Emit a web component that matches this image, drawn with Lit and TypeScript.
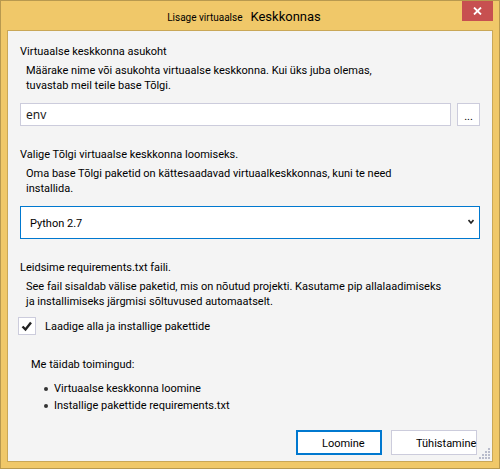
import { LitElement, html, css } from "lit";
import { customElement, state } from "lit/decorators.js";

@customElement("app-root")
export class AppRoot extends LitElement {
  @state() private install = true;

  static styles = css`
    :host {
      display: block;
      font-family: Roboto, "Liberation Sans", sans-serif;
      font-size: 11px;
      line-height: 15px;
      color: #000;
    }
    * { box-sizing: border-box; }
    .window {
      display: flex;
      flex-direction: column;
      min-height: 100vh;
      background: #f0c869;
      border: 1px solid #b8994f;
      padding: 0 6px 6px;
    }
    .titlebar {
      display: grid;
      grid-template-columns: 31px 1fr 31px;
      height: 29px;
    }
    .title {
      grid-column: 2;
      display: flex;
      justify-content: center;
      align-items: baseline;
      gap: 8px;
      margin: 0;
      padding-top: 8px;
      padding-right: 12px;
      font-size: 10px;
      font-weight: 400;
      line-height: 16px;
    }
    .title .strong { font-size: 13px; }
    .close {
      height: 20px;
      padding: 0;
      border: 0;
      background: #c75050;
      display: flex;
      align-items: center;
      justify-content: center;
    }
    .panel {
      flex: 1;
      display: flex;
      flex-direction: column;
      background: #f4f4f4;
      border: 1px solid #c9a757;
      padding: 12px 0 0;
    }
    .section { padding: 0 12px; margin-bottom: 20px; }
    .notice { padding: 0 12px; margin-bottom: 8px; }
    .heading {
      display: block;
      margin: 0;
      font-size: 11px;
      font-weight: 400;
      line-height: 18px;
    }
    .text { margin: 2px 0 0; padding-left: 6px; }
    .row, .picker { margin-top: 10px; }
    .row { display: flex; gap: 6px; }
    .field {
      flex: 1;
      min-width: 0;
      height: 23px;
      padding: 0 5px;
      border: 1px solid #ccccdc;
      border-radius: 0;
      background: #fff;
      font: 12px "Noto Sans", sans-serif;
      color: #222;
      outline: none;
    }
    .browse {
      width: 23px;
      height: 23px;
      padding: 4px 0 0;
      border: 1px solid #ccccdc;
      background: #fff;
      font: inherit;
      color: #000;
    }
    .picker { position: relative; }
    .select {
      display: block;
      width: 100%;
      height: 33px;
      padding: 2px 9px 0;
      appearance: none;
      border: 1px solid #0078cf;
      border-radius: 0;
      background: #fff;
      font: inherit;
      color: #000;
      outline: none;
    }
    .chevron {
      position: absolute;
      right: 6px;
      top: 13px;
      pointer-events: none;
    }
    .check {
      display: flex;
      align-items: center;
      gap: 9px;
      padding: 0 10px;
      margin-bottom: 21px;
    }
    .box { display: grid; width: 18px; height: 18px; }
    .box > * { grid-area: 1 / 1; }
    .tick {
      appearance: none;
      width: 18px;
      height: 18px;
      margin: 0;
      border: 1px solid #ccccdc;
      background: #fff;
    }
    .mark { pointer-events: none; }
    .summary { padding: 0 23px; }
    .list {
      margin: 6px 0 0;
      padding: 0 0 0 13px;
      list-style: none;
      line-height: 17px;
    }
    .item { display: flex; align-items: center; gap: 6px; }
    .item::before {
      content: "";
      width: 4px;
      height: 4px;
      border-radius: 50%;
      background: #333;
    }
    .footer {
      display: flex;
      justify-content: flex-end;
      gap: 9px;
      margin-top: auto;
      padding: 0 2px 2px 0;
    }
    .action {
      width: 86px;
      height: 25px;
      margin-bottom: 4px;
      padding: 2px 0 0 24px;
      border: 1px solid #ccccdc;
      background: #fff;
      font: inherit;
      color: #000;
      text-align: left;
      white-space: nowrap;
    }
    .primary { border: 2px solid #0078cf; }
    .end { display: flex; align-items: flex-end; gap: 2px; }
  `;

  render() {
    return html`
      <div class="window">
        <header class="titlebar">
          <h1 class="title"><span>Lisage virtuaalse</span><span class="strong">Keskkonnas</span></h1>
          <button class="close" aria-label="Sulge">
            <svg width="9" height="8" viewBox="0 0 9 8">
              <path d="M1 0.5L8 7.5M8 0.5L1 7.5" stroke="#fff" stroke-width="1.8" />
            </svg>
          </button>
        </header>
        <main class="panel">
          <section class="section">
            <label class="heading" for="location">Virtuaalse keskkonna asukoht</label>
            <p class="text">
              Määrake nime või asukohta virtuaalse keskkonna. Kui üks juba olemas,<br />tuvastab meil teile base Tõlgi.
            </p>
            <div class="row">
              <input class="field" id="location" type="text" value="env" />
              <button class="browse">...</button>
            </div>
          </section>
          <section class="section">
            <label class="heading" for="base">Valige Tõlgi virtuaalse keskkonna loomiseks.</label>
            <p class="text">
              Oma base Tõlgi paketid on kättesaadavad virtuaalkeskkonnas, kuni te need<br />installida.
            </p>
            <div class="picker">
              <select class="select" id="base"><option>Python 2.7</option></select>
              <svg class="chevron" width="6" height="6" viewBox="0 0 6 6">
                <path d="M0.5 1L3 4L5.5 1" fill="none" stroke="#222" stroke-width="1.6" />
              </svg>
            </div>
          </section>
          <section class="notice">
            <h2 class="heading">Leidsime requirements.txt faili.</h2>
            <p class="text">
              See fail sisaldab välise paketid, mis on nõutud projekti. Kasutame pip allalaadimiseks<br />ja installimiseks järgmisi sõltuvused automaatselt.
            </p>
          </section>
          <label class="check">
            <span class="box">
              <input
                class="tick"
                type="checkbox"
                .checked=${this.install}
                @change=${() => (this.install = !this.install)}
              />
              ${this.install
                ? html`<svg class="mark" width="18" height="18" viewBox="0 0 18 18">
                    <path d="M4.5 9.5L7.5 12.5L13 5.5" fill="none" stroke="#222" stroke-width="2.4" />
                  </svg>`
                : ""}
            </span>
            <span>Laadige alla ja installige pakettide</span>
          </label>
          <section class="summary">
            <h2 class="heading">Me täidab toimingud:</h2>
            <ul class="list">
              <li class="item">Virtuaalse keskkonna loomine</li>
              <li class="item">Installige pakettide requirements.txt</li>
            </ul>
          </section>
          <footer class="footer">
            <button class="action primary">Loomine</button>
            <div class="end">
              <button class="action">Tühistamine</button>
              <svg width="11" height="11" viewBox="0 0 11 11" fill="#b9bccb">
                <path d="M9 0h2v2h-2zM6 3h2v2h-2zM9 3h2v2h-2zM3 6h2v2h-2zM6 6h2v2h-2zM9 6h2v2h-2zM0 9h2v2h-2zM3 9h2v2h-2zM6 9h2v2h-2zM9 9h2v2h-2z" />
              </svg>
            </div>
          </footer>
        </main>
      </div>
    `;
  }
}
